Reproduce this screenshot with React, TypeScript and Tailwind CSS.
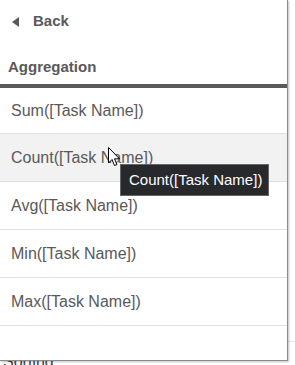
const items = ['Sum([Task Name])', 'Count([Task Name])', 'Avg([Task Name])', 'Min([Task Name])', 'Max([Task Name])'];

function Cursor() {
  return (
    <svg width="13" height="20" viewBox="0 0 13 20" className="absolute left-[108px] top-[147px]">
      <path d="M0.5 0.5 L0.5 16 L4 12.5 L6.5 18.5 L9 17.5 L6.5 11.8 L11.5 11.8 Z" fill="#fff" stroke="#000" strokeWidth="1" strokeLinejoin="round" />
    </svg>
  );
}

export default function App() {
  return (
    <div className="relative h-[365px] w-[295px] overflow-hidden bg-white font-['Liberation_Sans',Arial,sans-serif] text-[16px] text-[#595959]">
      {/* underlying property panel */}
      <div className="pt-[341px]">
        <div className="border-t border-[#e6e6e6]" />
        <div className="pl-[3px] pt-[10px] leading-[20px] text-[#404040]">Sorting</div>
      </div>

      {/* popover */}
      <div className="absolute left-0 top-0 h-[361px] w-[288px] border-r border-b border-[#8c8c8c] bg-white shadow-[1px_1px_2px_rgba(0,0,0,0.25)]">
        <div className="flex h-[42px] items-center pl-[12px]">
          <svg width="7" height="10" viewBox="0 0 7 10" className="mt-[1px]">
            <path d="M7 0 L0 5 L7 10 Z" fill="#595959" />
          </svg>
          <span className="ml-[14px] text-[15px] font-bold">Back</span>
        </div>
        <div className="flex h-[42px] items-end pb-[6px] pl-[8px] text-[15px] font-bold">Aggregation</div>
        <div className="h-[4px] bg-[#595959]" />
        {items.map((label, i) => (
          <div
            key={label}
            className={
              'flex items-center border-b border-[#e0e0e0] pl-[11px] ' +
              (i === 0 ? 'h-[46px] ' : 'h-[48px] ') +
              (i === 1 ? 'bg-[#f2f2f2]' : '')
            }
          >
            {label}
          </div>
        ))}
      </div>

      {/* tooltip */}
      <div className="absolute left-[120px] top-[164px] flex h-[32px] w-[149px] items-center border border-[#666] bg-[#27292d] pl-[8px] text-[15px] text-white">
        Count([Task Name])
      </div>
      <Cursor />
    </div>
  );
}
